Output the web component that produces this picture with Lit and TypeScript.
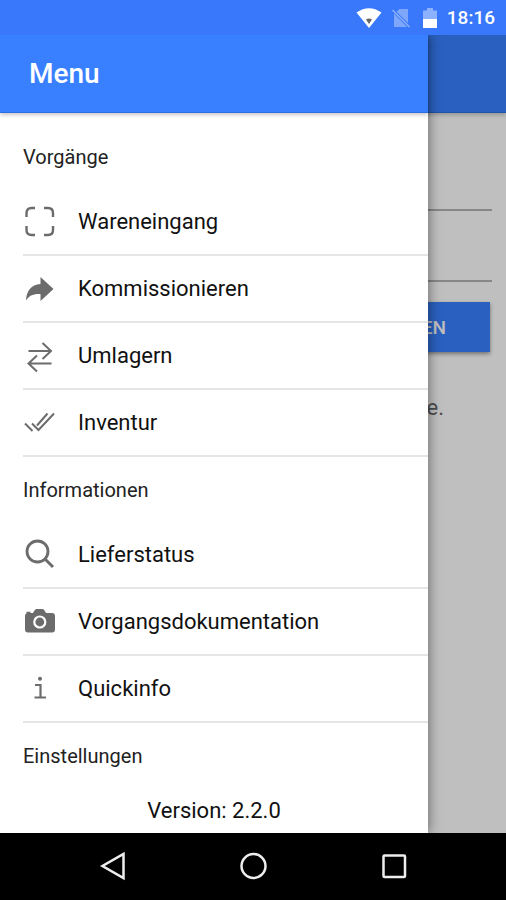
import { LitElement, html, css, svg } from "lit";
import type { SVGTemplateResult } from "lit";
import { customElement, property } from "lit/decorators.js";

const icons: Record<string, SVGTemplateResult> = {
  scan: svg`<path d="M3.500 12V8q0-5 5-5h3.500M21 3h4q5 0 5 5v4M30 21v4q0 5-5 5h-4M12 30H8.500q-5 0-5-5v-4" fill="none" stroke="currentColor" stroke-width="2.4"/>`,
  forward: svg`<path d="M17.500 5 30.500 17 17.500 29v-7C10.500 21.500 6 23.500 3 28.500 3.500 19 8 12.500 17.500 12z" fill="currentColor"/>`,
  swap: svg`<path d="M5.500 12H28M19.500 4l8.500 8-8.500 8M28.500 24.500H6M14 16.500l-8.500 8 8.500 8" fill="none" stroke="currentColor" stroke-width="2"/>`,
  checks: svg`<path d="M2 17.500l7.500 7.500M9 17.500l6.500 6.500L31 7.500M14 19.500L24.500 7.500" fill="none" stroke="currentColor" stroke-width="2"/>`,
  search: svg`<circle cx="14.500" cy="13.500" r="10.500" fill="none" stroke="currentColor" stroke-width="2.8"/><path d="M22 21l8 8" stroke="currentColor" stroke-width="3"/>`,
  camera: svg`<path fill="currentColor" d="M11.500 5.500q.5-1.500 2-1.500h6q1.500 0 2 1.500l1.500 2.500H29q3 0 3 3v13.500q0 3-3 3H5q-3 0-3-3V11q0-2.300 1.500-2.800V6.800h4V8h2.500z"/><circle cx="16.800" cy="17" r="5.500" fill="none" stroke="#fff" stroke-width="2.200"/>`,
  info: svg`<circle cx="17" cy="6.800" r="2" fill="currentColor"/><path d="M12 13h5.500v12.500M11.500 25.500h11.500" fill="none" stroke="currentColor" stroke-width="2.200"/>`,
};

const sections = [
  {
    title: "Vorgänge",
    items: [
      ["scan", "Wareneingang"],
      ["forward", "Kommissionieren"],
      ["swap", "Umlagern"],
      ["checks", "Inventur"],
    ],
  },
  {
    title: "Informationen",
    items: [
      ["search", "Lieferstatus"],
      ["camera", "Vorgangsdokumentation"],
      ["info", "Quickinfo"],
    ],
  },
  { title: "Einstellungen", items: [] },
];

@customElement("status-bar")
class StatusBar extends LitElement {
  static styles = css`
    :host {
      display: flex;
      flex-shrink: 0;
      align-items: center;
      justify-content: flex-end;
      height: 35px;
      padding-right: 11px;
      background: #3978fa;
      color: #fff;
      font-size: 19px;
      font-weight: 500;
    }
    .wifi { width: 26px; height: 20px; margin-right: 9px; }
    .sim { width: 20px; height: 20px; margin-right: 12px; }
    .battery { width: 14px; height: 20px; margin-right: 10px; }
  `;
  render() {
    return html`
      <svg class="wifi" viewBox="0 0 26 20"><path d="M.5 4.500Q13-4 25.500 4.500L13 20z" fill="#fff"/><path d="M10 11.500Q13 9.500 16 11.500L13 16z" fill="#666"/></svg>
      <svg class="sim" viewBox="0 0 20 20"><path d="M8.500 1H17v14L5.500 3.800zM3 5.500V19h13.200z" fill="#7ea7fc"/><path d="M1.500 2 18.500 19" fill="none" stroke="#8db2fd" stroke-width="1.500"/></svg>
      <svg class="battery" viewBox="0 0 14 20"><path d="M0 2.500h4V0h6v2.500h4V11H0z" fill="#8db2fd"/><path d="M0 11h14v9H0z" fill="#fff"/></svg>
      <span>18:16</span>
    `;
  }
}

@customElement("menu-section")
class MenuSection extends LitElement {
  @property() heading = "";
  @property({ attribute: false }) items: string[][] = [];
  static styles = css`
    :host { display: block; padding-left: 23px; }
    .heading {
      display: flex;
      align-items: center;
      height: 65px;
      margin: 0;
      font-size: 20px;
      font-weight: 400;
      color: #222;
    }
    .item {
      display: flex;
      align-items: center;
      gap: 22px;
      box-sizing: border-box;
      width: 100%;
      height: 67px;
      padding: 0;
      border: 0;
      border-bottom: 2px solid #e5e5e5;
      background: none;
      color: #111;
      font: inherit;
      font-size: 22px;
      text-align: left;
    }
    .icon { width: 33px; height: 33px; color: #6c6c6c; overflow: visible; }
  `;
  render() {
    return html`
      <h2 class="heading">${this.heading}</h2>
      ${this.items.map(
        ([icon, label]) => html`<button class="item" type="button">
          <svg class="icon" viewBox="0 0 33 33" aria-hidden="true">${icons[icon]}</svg>
          <span>${label}</span>
        </button>`
      )}
    `;
  }
}

@customElement("app-root")
class AppRoot extends LitElement {
  static styles = css`
    :host {
      display: flex;
      flex-direction: column;
      min-height: 100vh;
      font-family: Roboto, "Liberation Sans", sans-serif;
      background: #fff;
    }
    .stage { display: grid; flex: 1; grid-template-columns: 100%; overflow: hidden; }
    .page, .backdrop, .drawer { grid-area: 1 / 1; }
    .bar {
      box-sizing: border-box;
      height: 78px;
      background: #3880ff;
      border-bottom: 1px solid #2c6fe0;
      box-shadow: 0 2px 4px rgba(0, 0, 0, 0.22);
    }
    .form { display: flex; flex-direction: column; padding: 27px 14px 0; }
    .field {
      box-sizing: border-box;
      width: 100%;
      height: 71px;
      border: 0;
      border-bottom: 2px solid #b4b4b4;
      background: none;
      font: inherit;
      font-size: 22px;
    }
    .submit {
      height: 50px;
      margin: 20px 2px 0 0;
      padding: 0 44px;
      border: 0;
      background: #3880ff;
      box-shadow: 0 2px 4px rgba(0, 0, 0, 0.4);
      color: #fff;
      font: inherit;
      font-size: 19px;
      font-weight: 500;
      text-align: right;
    }
    .note { margin: 43px 48px 0; font-size: 22px; line-height: 26px; color: #666; text-align: right; }
    .backdrop { background: rgba(0, 0, 0, 0.25); }
    .drawer {
      width: 84.6%;
      background: #fff;
      box-shadow: 0 0 12px rgba(0, 0, 0, 0.5);
    }
    .title {
      display: flex;
      align-items: center;
      margin: 0;
      padding-left: 29px;
      color: #fff;
      font-size: 28px;
      font-weight: 500;
    }
    .list { padding-top: 11px; }
    .version { margin: 0; font-size: 22px; line-height: 45px; color: #111; text-align: center; }
    .nav {
      display: flex;
      flex-shrink: 0;
      align-items: center;
      justify-content: center;
      gap: 100px;
      height: 67px;
      background: #000;
    }
    .key { display: flex; padding: 0; border: 0; background: none; }
    .glyph { width: 40px; height: 40px; fill: none; stroke: #eee; stroke-width: 2.5; }
  `;
  render() {
    return html`
      <status-bar></status-bar>
      <div class="stage">
        <main class="page">
          <div class="bar"></div>
          <form class="form">
            <input class="field" type="text" aria-label="Benutzer" />
            <input class="field" type="password" aria-label="Passwort" />
            <button class="submit" type="button">EN</button>
            <p class="note">e.</p>
          </form>
        </main>
        <div class="backdrop"></div>
        <nav class="drawer">
          <h1 class="bar title">Menu</h1>
          <div class="list">
            ${sections.map((s) => html`<menu-section .heading=${s.title} .items=${s.items}></menu-section>`)}
            <p class="version">Version: 2.2.0</p>
          </div>
        </nav>
      </div>
      <footer class="nav">
        <button class="key" type="button" aria-label="Zurück">
          <svg class="glyph" viewBox="0 0 40 40"><path d="M30.500 7v24L9.500 19z"/></svg>
        </button>
        <button class="key" type="button" aria-label="Start">
          <svg class="glyph" viewBox="0 0 40 40"><circle cx="20.500" cy="19" r="12"/></svg>
        </button>
        <button class="key" type="button" aria-label="Übersicht">
          <svg class="glyph" viewBox="0 0 40 40"><rect x="10.500" y="8.500" width="21.500" height="21.500" rx="1"/></svg>
        </button>
      </footer>
    `;
  }
}
